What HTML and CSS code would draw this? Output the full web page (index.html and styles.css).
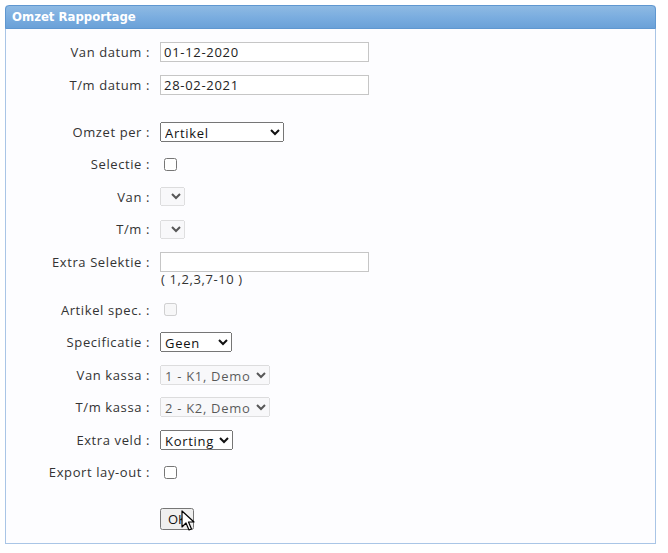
FILE: index.html
```html
<!DOCTYPE html>
<html lang="nl">
<head>
  <meta charset="UTF-8" />
  <title>Omzet Rapportage</title>
  <link rel="stylesheet" href="styles.css">
</head>
<body>
  <div class="panel">
    <div class="panel-head">Omzet Rapportage</div>

    <form class="panel-body" onsubmit="return false">
      <div class="row">
        <label class="lbl">Van datum :</label>
        <input type="text" class="txt" value="01-12-2020">
      </div>
      <div class="row">
        <label class="lbl">T/m datum :</label>
        <input type="text" class="txt" value="28-02-2021">
      </div>

      <div class="spacer"></div>

      <div class="row">
        <label class="lbl">Omzet per :</label>
        <select class="sel sel-omzet">
          <option>Artikel</option>
          <option>Groep</option>
        </select>
      </div>
      <div class="row">
        <label class="lbl">Selectie :</label>
        <input type="checkbox">
      </div>
      <div class="row">
        <label class="lbl">Van :</label>
        <select class="sel sel-tiny" disabled></select>
      </div>
      <div class="row">
        <label class="lbl">T/m :</label>
        <select class="sel sel-tiny" disabled></select>
      </div>
      <div class="row row-hint">
        <label class="lbl">Extra Selektie :</label>
        <div class="field">
          <input type="text" class="txt">
          <div class="hint">( 1,2,3,7-10 )</div>
        </div>
      </div>
      <div class="row">
        <label class="lbl">Artikel spec. :</label>
        <input type="checkbox" disabled>
      </div>
      <div class="row">
        <label class="lbl">Specificatie :</label>
        <select class="sel sel-spec">
          <option>Geen</option>
        </select>
      </div>
      <div class="row">
        <label class="lbl">Van kassa :</label>
        <select class="sel sel-kassa" disabled>
          <option>1 - K1, Demo</option>
        </select>
      </div>
      <div class="row">
        <label class="lbl">T/m kassa :</label>
        <select class="sel sel-kassa" disabled>
          <option>2 - K2, Demo</option>
        </select>
      </div>
      <div class="row">
        <label class="lbl">Extra veld :</label>
        <select class="sel sel-veld">
          <option>Korting</option>
        </select>
      </div>
      <div class="row">
        <label class="lbl">Export lay-out :</label>
        <input type="checkbox">
      </div>

      <div class="spacer"></div>

      <div class="row">
        <span class="lbl"></span>
        <div class="btn-wrap">
          <button type="submit" class="btn">OK</button>
          <!-- muiscursor boven de knop -->
          <svg class="cursor" width="14" height="22" viewBox="0 0 14 22">
            <path d="M1 1 L1 17 L5 13 L8 20 L10.5 19 L7.5 12 L13 12 Z" fill="#fff" stroke="#000" stroke-width="1.2" stroke-linejoin="round"/>
          </svg>
        </div>
      </div>
    </form>
  </div>
</body>
</html>
```

FILE: styles.css
```css
/* ===== Basis ===== */
* {
  box-sizing: border-box;
}
body {
  margin: 0;
  padding: 5px;
  background: #fff;
  font-family: 'Open Sans', 'DejaVu Sans', sans-serif;
  font-size: 13px;
  letter-spacing: 0.6px;
  color: #333;
}

/* ===== Paneel ===== */
.panel {
  width: 651px;
  height: 539px;
  border: 1px solid #a9c5e6;
  border-top: none;
  border-radius: 4px 4px 0 0;
  background: #fdfdff;
}
.panel-head {
  height: 24px;
  margin: 0 -1px;
  padding: 0 6px;
  border: 1px solid #5f97d0;
  border-radius: 4px 4px 0 0;
  background: linear-gradient(#8ebae3, #79acdf 55%, #6aa1d8);
  color: #fff;
  font-family: 'DejaVu Sans Condensed', 'DejaVu Sans', sans-serif;
  font-weight: bold;
  font-size: 13px;
  letter-spacing: 0;
  line-height: 22px;
}
.panel-body {
  padding: 6.75px 0 8px;
}

/* ===== Rijen ===== */
.row {
  display: flex;
  align-items: center;
  height: 32.5px;
}
.spacer {
  height: 14.5px;
}
.lbl {
  width: 144px;
  margin-right: 10px;
  text-align: right;
  white-space: nowrap;
}
.row-hint {
  height: 48px;
  align-items: flex-start;
  padding-top: 6.5px;
}
.row-hint .lbl {
  line-height: 20px;
}
.field {
  display: flex;
  flex-direction: column;
}
.hint {
  line-height: 15px;
  padding-left: 1px;
}

/* ===== Invoervelden ===== */
.txt {
  width: 209px;
  height: 20px;
  margin: 0;
  padding: 0 3px;
  border: 1px solid #c6c6c6;
  background: #fff;
  font: 13px 'Open Sans', 'DejaVu Sans', sans-serif;
  letter-spacing: 0.7px;
  color: #222;
}
input[type="checkbox"] {
  width: 13px;
  height: 13px;
  margin: 0 0 0 4px;
}
.sel {
  height: 20px;
  margin: 0;
  font: 13px 'Open Sans', 'DejaVu Sans', sans-serif;
  letter-spacing: 0.7px;
  color: #111;
}
.sel-omzet { width: 124px; }
.sel-tiny  { width: 25px; height: 19px; }
.sel-spec  { width: 72px; }
.sel-kassa { width: 110px; }
.sel-veld  { width: 73px; }

/* ===== Knop ===== */
.btn-wrap {
  position: relative;
}
.btn {
  width: 34px;
  height: 22px;
  padding: 0;
  font: 13px 'Open Sans', 'DejaVu Sans', sans-serif;
  color: #111;
}
.cursor {
  position: absolute;
  left: 21px;
  top: 2px;
}
```
